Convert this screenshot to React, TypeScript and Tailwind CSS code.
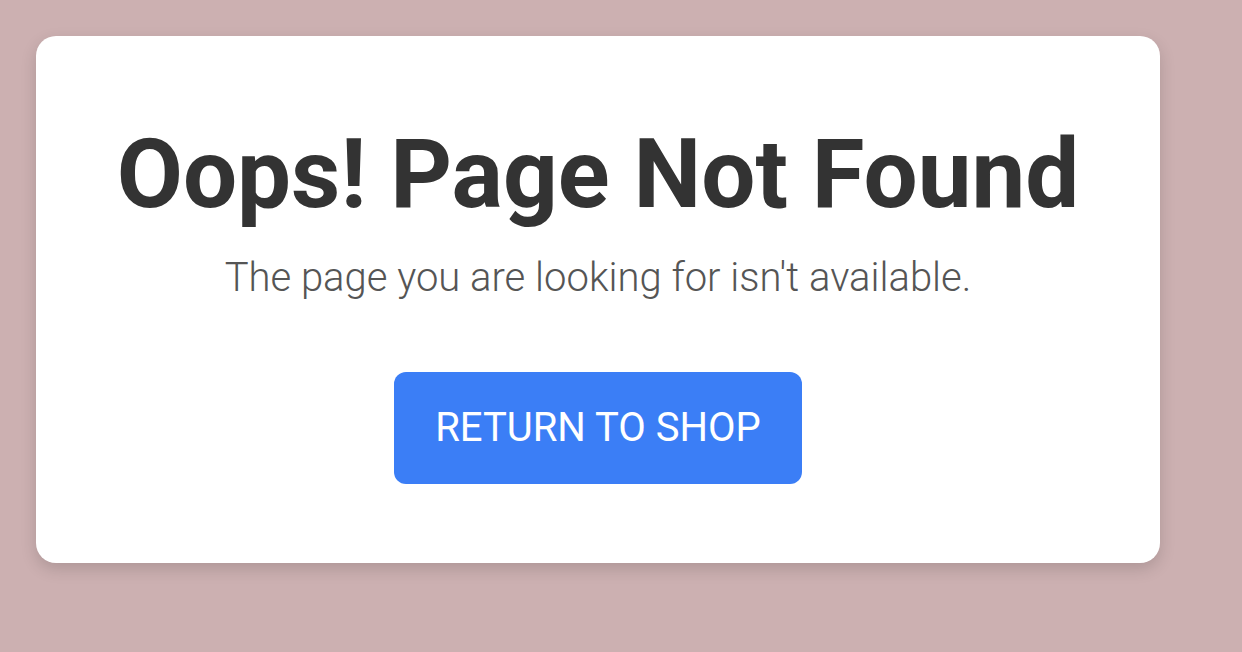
export default function App() {
  return (
    <div className="w-[1242px] h-[652px] bg-[#ccb0b1] overflow-hidden" style={{ fontFamily: "Roboto, 'Liberation Sans', sans-serif" }}>
      <div className="ml-[36px] mt-[36px] w-[1124px] h-[527px] bg-white rounded-[20px] shadow-[0_6px_16px_rgba(0,0,0,0.15)] flex flex-col items-center pt-[78px]">
        <h1 className="text-[96px] leading-[120px] font-bold text-[#333333]">Oops! Page Not Found</h1>
        <p className="mt-[20px] text-[40px] leading-[48px] font-light text-[#555555]">The page you are looking for isn't available.</p>
        <button className="mt-[70px] w-[408px] h-[112px] rounded-[12px] bg-[#3b7ef6] text-white text-[40px] font-normal">RETURN TO SHOP</button>
      </div>
    </div>
  );
}
